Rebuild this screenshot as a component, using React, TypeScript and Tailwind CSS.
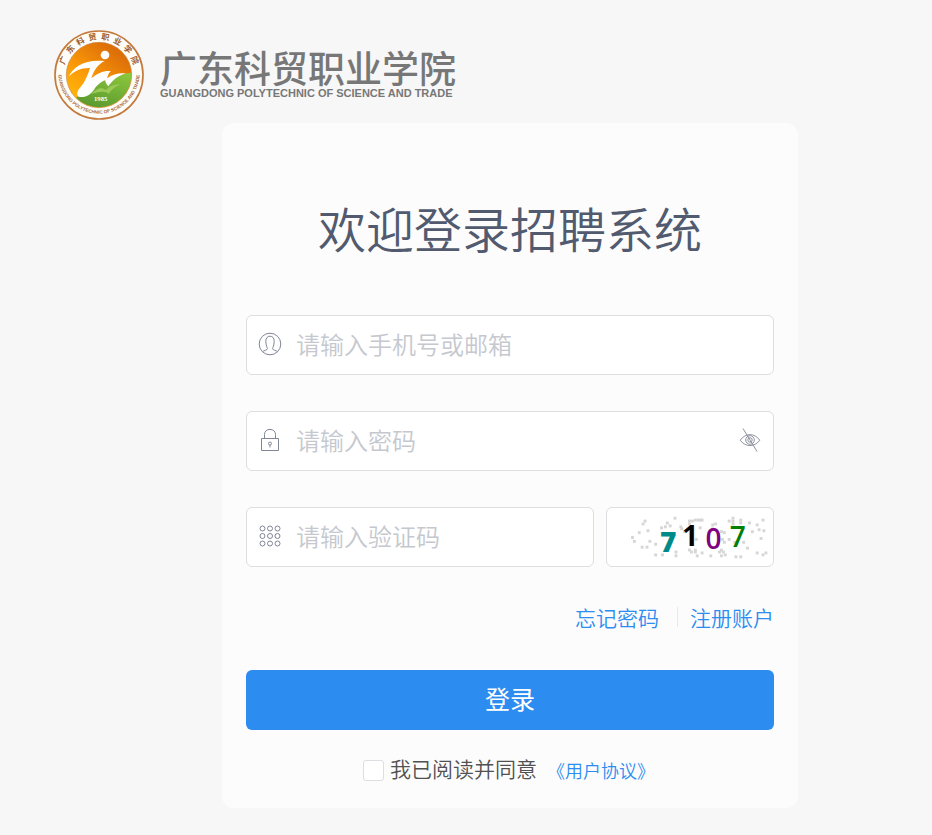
// src/pages/Login.tsx
import React, { useState } from "react";

const captchaDots = [
  [135, 114], [140, 126], [157, 99], [169, 72], [174, 63], [183, 92], [166, 143], [179, 143],
  [190, 125], [208, 134], [208, 168], [228, 168], [224, 84], [238, 80], [242, 70], [251, 78],
  [266, 55], [284, 80], [289, 86], [271, 160], [271, 170], [298, 95], [313, 63], [313, 72],
  [320, 64], [330, 59], [339, 59], [346, 59], [352, 59], [346, 83], [334, 120], [312, 153],
  [318, 160], [330, 153], [330, 160], [337, 172], [352, 163], [383, 76], [385, 86], [392, 72],
  [378, 170], [404, 160], [411, 153], [411, 172], [418, 160], [422, 168], [421, 130], [414, 120],
  [420, 100], [410, 96], [436, 62], [446, 54], [446, 64], [446, 73], [472, 61], [472, 70],
  [435, 120], [452, 128], [479, 130], [492, 148], [498, 68], [506, 96], [522, 76], [529, 90],
  [540, 59], [543, 93], [535, 118], [523, 163], [540, 168], [548, 163], [456, 175], [472, 175],
];

function Emblem() {
  return (
    <svg viewBox="20 17 270 270" className="size-[90px] shrink-0" role="img" aria-label="校徽">
      <defs>
        <linearGradient id="sun" x1="0.1" y1="0.9" x2="0.7" y2="0.1">
          <stop offset="0" stopColor="#ffb90a" />
          <stop offset="0.45" stopColor="#fb9a08" />
          <stop offset="1" stopColor="#dd6f08" />
        </linearGradient>
        <linearGradient id="field" x1="0.8" y1="0" x2="0.3" y2="1">
          <stop offset="0" stopColor="#8cc63c" />
          <stop offset="1" stopColor="#56962f" />
        </linearGradient>
        <clipPath id="disc">
          <circle cx="155" cy="152" r="97" />
        </clipPath>
        <path id="topArc" d="M 50 128 A 108 108 0 0 1 260 128" />
        <path id="bottomArc" d="M 33 146 A 122 122 0 1 0 277 146" />
      </defs>
      <circle cx="155" cy="152" r="132" fill="#fffdf8" stroke="#c37a3c" strokeWidth="5" />
      <circle cx="155" cy="152" r="98" fill="url(#sun)" stroke="#c9884c" strokeWidth="2" />
      <g clipPath="url(#disc)">
        <path d="M88 218 C119 211 126 190 146 178 C164 167 186 166 204 157 C222 150 237 146 260 144 L260 260 L90 260 Z" fill="url(#field)" />
        <path d="M64 158 C76 128 112 104 172 110 C152 120 140 136 132 162 C150 146 170 138 190 140 C183 148 180 156 180 162 C196 149 214 145 236 147 C212 154 196 168 183 186 C177 180 174 174 174 168 C160 172 148 184 140 196 C130 210 114 222 94 217 C86 210 90 198 100 188 C114 172 122 150 128 131 C104 130 80 138 64 158 Z" fill="#fff" />
        <path d="M130 210 C150 190 162 187 176 197 C188 185 200 180 220 180 C199 189 191 199 185 208 C172 200 154 200 130 210 Z" fill="#9ac955" />
      </g>
      <circle cx="173" cy="92" r="13" fill="#fff" />
      <text x="160" y="229" textAnchor="middle" fill="#fff" className="font-['Liberation_Serif'] text-[20px] font-bold">1985</text>
      <text fill="#9b5a2a" className="font-['Noto_Sans_CJK_SC',sans-serif] text-[24px] font-bold">
        <textPath href="#topArc" startOffset="50%" textAnchor="middle">
          {"广东科贸职业学院".split("").join("\u2002")}
        </textPath>
      </text>
      <text fill="#a96b3c" className="font-['Liberation_Sans',sans-serif] text-[14px] font-bold">
        <textPath href="#bottomArc" startOffset="50%" textAnchor="middle">GUANGDONG POLYTECHNIC OF SCIENCE AND TRADE</textPath>
      </text>
    </svg>
  );
}

function UserIcon() {
  return (
    <svg viewBox="0 0 24 24" className="size-6 shrink-0" fill="none" stroke="#808695" aria-hidden="true">
      <circle cx="12" cy="12" r="10.8" />
      <path d="M4.5 19.7C5.5 18.4 9.4 18.3 9.4 16.7C9.4 15.6 7.8 13.5 7.8 9.4C7.8 6 9.5 4.2 12 4.2S16.2 6 16.2 9.4C16.2 13.5 14.6 15.6 14.6 16.7C14.6 18.3 18.5 18.4 19.5 19.7" />
    </svg>
  );
}

function LockIcon() {
  return (
    <svg viewBox="0 0 24 24" className="size-6 shrink-0" fill="none" stroke="#808695" aria-hidden="true">
      <path d="M3.5 10.5H20.5V22.5H3.5ZM6.5 10.5V6.5C6.5 3.4 8.8 1.4 12 1.4S17.5 3.4 17.5 6.5V10.5" />
      <circle cx="12" cy="15.6" r="1.5" />
      <path d="M12 17V19.5" />
    </svg>
  );
}

function GridIcon() {
  return (
    <svg viewBox="0 0 24 24" className="size-6 shrink-0" fill="none" stroke="#808695" aria-hidden="true">
      {[4.5, 12, 19.5].map((y) =>
        [4.5, 12, 19.5].map((x) => <circle key={`${x}-${y}`} cx={x} cy={y} r="2.5" />)
      )}
    </svg>
  );
}

function EyeOffIcon() {
  return (
    <svg viewBox="0 0 24 24" className="size-6" fill="none" stroke="#808695" strokeWidth="0.9" aria-hidden="true">
      <path d="M2.2 12.2C7.5 4.8 16.5 4.8 21.8 12.2C16.5 19.4 7.5 19.4 2.2 12.2Z" />
      <circle cx="12" cy="12" r="4.3" />
      <circle cx="12" cy="12" r="2.2" />
      <path d="M5 0.5L19 23.5" />
    </svg>
  );
}

function Captcha() {
  return (
    <svg viewBox="0 0 168 60" className="h-full w-full" role="img" aria-label="验证码">
      <g transform="translate(-21 -8)" fill="#d6d6d6">
        {captchaDots.map(([x, y]) => (
          <rect key={`${x}-${y}`} x={Math.round(x / 3) - 1} y={Math.round(y / 3) - 1} width="3" height="3" />
        ))}
      </g>
      <g className="font-['Open_Sans',sans-serif] text-[29px]">
        <text x="53" y="45" fill="#008b8b" fontWeight="800">7</text>
        <text x="76" y="39" fill="#000" fontWeight="700">1</text>
        <text x="100" y="42" fill="#800080" fontWeight="600">0</text>
        <text x="125" y="40" fill="#008000" fontWeight="600">7</text>
      </g>
    </svg>
  );
}

type FieldProps = {
  name: string;
  placeholder: string;
  type?: string;
  icon: React.ReactNode;
  children?: React.ReactNode;
};

function Field({ name, placeholder, type = "text", icon, children }: FieldProps) {
  return (
    <div className="flex h-15 min-w-0 flex-1 items-center rounded-md border border-[#dcdee2] bg-white px-[11px]">
      <label htmlFor={name} aria-label={placeholder} className="pb-0.5">{icon}</label>
      <input
        id={name}
        name={name}
        type={type}
        placeholder={placeholder}
        className="ml-3.5 h-full min-w-0 flex-1 pb-1 text-2xl font-[350] text-[#515a6e] outline-none placeholder:text-[#c5c8ce]"
      />
      {children}
    </div>
  );
}

export default function Login() {
  const [showPassword, setShowPassword] = useState(false);

  return (
    <div className="min-h-screen bg-[#f7f7f7] pb-6 font-['Noto_Sans_CJK_SC',sans-serif]">
      {/* School logo */}
      <header className="flex items-center gap-4 pt-[30px] pl-[54px] text-[#777777]">
        <Emblem />
        <div>
          <p className="text-[37px] leading-9 font-medium">广东科贸职业学院</p>
          <p className="font-['Liberation_Sans',sans-serif] text-[11px] leading-4 font-bold">
            GUANGDONG POLYTECHNIC OF SCIENCE AND TRADE
          </p>
        </div>
      </header>

      {/* Login card */}
      <main className="mt-[3px] flex justify-center pl-22">
        <form
          className="w-full max-w-xl rounded-xl bg-[#fcfcfc] px-6 pt-18 pb-6"
          onSubmit={(e) => e.preventDefault()}
        >
          <h1 className="text-center text-5xl leading-16 font-[350] text-[#515a6e]">欢迎登录招聘系统</h1>

          <div className="mt-14 flex flex-col gap-9">
            <div className="flex">
              <Field name="account" placeholder="请输入手机号或邮箱" icon={<UserIcon />} />
            </div>
            <div className="flex">
              <Field
                name="password"
                type={showPassword ? "text" : "password"}
                placeholder="请输入密码"
                icon={<LockIcon />}
              >
                <button
                  type="button"
                  aria-label="显示密码"
                  className="pb-0.5"
                  onClick={() => setShowPassword(!showPassword)}
                >
                  <EyeOffIcon />
                </button>
              </Field>
            </div>
            <div className="flex gap-3">
              <Field name="captcha" placeholder="请输入验证码" icon={<GridIcon />} />
              <button
                type="button"
                aria-label="刷新验证码"
                className="h-15 w-42 overflow-hidden rounded-md border border-[#dcdee2] bg-white"
              >
                <Captcha />
              </button>
            </div>
          </div>

          <div className="mt-9 flex items-center justify-end text-[21px] leading-7 font-[350] text-[#2d8cf0]">
            <a href="#forgot">忘记密码</a>
            <span className="mr-3 ml-4.5 h-5 w-px bg-[#e8eaec]" />
            <a href="#register">注册账户</a>
          </div>

          <button type="submit" className="mt-[39px] h-15 w-full rounded-md bg-[#2d8cf0] pb-0.5 text-[25px] text-white">
            登录
          </button>

          <div className="mt-[26px] flex items-center justify-center pr-0.5 font-[350]">
            <label className="flex items-center gap-1.5 text-[21px] leading-8 text-[#515151]">
              <input
                type="checkbox"
                className="size-[21px] appearance-none rounded-[3px] border border-[#dcdee2] bg-white checked:bg-[#2d8cf0]"
              />
              <span className="-mt-1">我已阅读并同意</span>
            </label>
            <a href="#agreement" className="ml-2.5 text-lg leading-7 text-[#2d8cf0]">《用户协议》</a>
          </div>
        </form>
      </main>
    </div>
  );
}
